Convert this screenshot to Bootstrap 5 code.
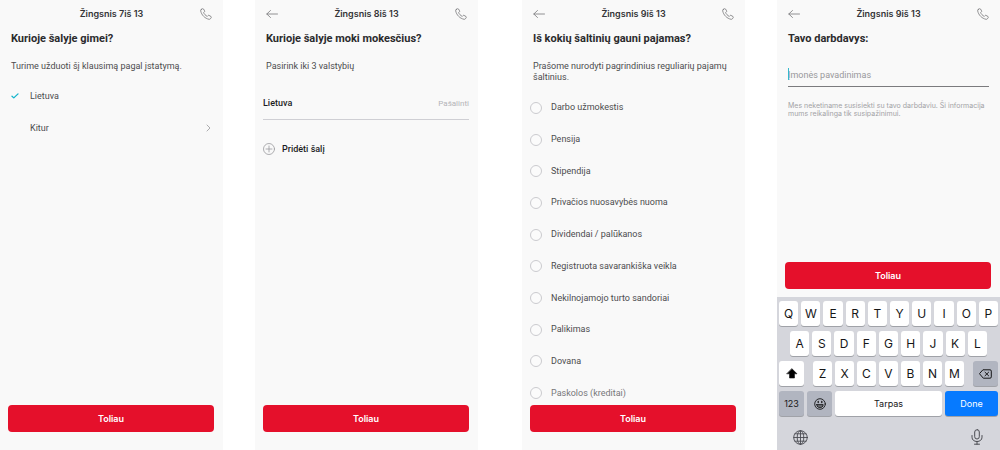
<!DOCTYPE html>
<html lang="lt">
<head>
<meta charset="utf-8">
<meta name="viewport" content="width=device-width, initial-scale=1">
<title>Registracija</title>
<link href="https://cdn.jsdelivr.net/npm/bootstrap@5.3.0/dist/css/bootstrap.min.css" rel="stylesheet">
<style>
  body { font-family: Roboto, "Liberation Sans", sans-serif; font-size: 9px; line-height: 11px; color: #4c4c4e; background: #fff; }
  button, input { font-family: inherit; }
  svg { display: block; fill: none; stroke: currentColor; stroke-linecap: round; stroke-linejoin: round; }
  .screens { gap: 32px; }
  .screen { flex: 1 1 0; min-width: 0; background: #f9f9f9; padding: 8px 9px 0 8px; }
  .screen-third { margin-left: 12px; }
  .topbar { display: grid; grid-template-columns: 16px 1fr 16px; align-items: center; height: 12px; padding: 0 2px 0 3px; color: #77777a; }
  .step { font-family: Inter, "Liberation Sans", sans-serif; font-size: 9px; line-height: 12px; font-weight: 600; color: #343436; }
  .icon-btn { padding: 0; border: 0; background: none; color: inherit; }
  .title { font-size: 11px; line-height: 14px; font-weight: 700; color: #2b2b2d; margin: 12px 3px 0; }
  .intro { margin: 15px 3px 0; }
  .choice { display: flex; align-items: center; width: 100%; height: 32px; padding: 0 3px; border: 0; background: none; color: inherit; font-size: 9px; text-align: left; }
  .tick { width: 19px; color: #13b5cc; }
  .chevron { color: #98989b; }
  .next { height: 27px; padding: 0; border: 0; border-radius: 4px; font-family: Inter, "Liberation Sans", sans-serif; font-size: 9px; line-height: 27px; font-weight: 600; color: #fff; background: #e5102b; margin-bottom: 18px; flex: none; }
  .next:hover { background: #c90d25; color: #fff; }
  .country { height: 32px; border-bottom: 1px solid #cfcfd4; color: #1c1c1e; font-weight: 500; }
  .remove { font-size: 8px; font-weight: 400; color: #b4b4b8; text-decoration: none; }
  .add { gap: 7px; margin-top: 23px; color: #1c1c1e; font-size: 9px; font-weight: 500; }
  .add svg { color: #9a9a9e; }
  .sources { flex: 1 1 0; min-height: 0; margin: 9px 0 -4px; }
  .source { flex: 1 1 0; min-height: 0; gap: 9px; }
  .source input { appearance: none; width: 12px; height: 12px; margin: 0; border: 1px solid #cbcbcf; border-radius: 50%; background: #fbfbfb; }
  .source input:checked { border: 4px solid #e5102b; }
  .source:last-child { color: #77777a; }
  .next-over { position: relative; }
  .employer { position: relative; margin: 18px 2px 0 3px; border-bottom: 1px solid #7b7b7e; }
  .employer input { display: block; width: 100%; height: 22px; padding: 0; border: 0; outline: 0; background: none; font-size: 9px; color: #343436; }
  .employer input::placeholder { color: #98989b; opacity: 1; }
  .caret { position: absolute; left: 0; top: 4px; width: 1px; height: 12px; background: #35b9cc; }
  .hint { font-family: Inter, "Liberation Sans", sans-serif; font-size: 7px; line-height: 8px; color: #a2a2a5; margin: 15px 3px 0; }
  .keyboard { font-family: Inter, "Liberation Sans", sans-serif; margin: 0 -9px 0 -8px; padding: 4px 2px 0; height: 153px; background: #d5d6dc; color: #161617; }
  .keyrow { display: flex; gap: 3px; margin-bottom: 5px; }
  .keyrow-mid { padding: 0 11px; }
  .keyrow-low { padding: 0 6px; }
  .key { flex: 1 1 0; min-width: 0; height: 25px; padding: 0; border: 0; border-radius: 3px; background: #fff; box-shadow: 0 1px 0 #a0a2a8; color: #161617; font-size: 12px; line-height: 25px; display: flex; align-items: center; justify-content: center; }
  .key-side { flex: 0 0 25px; font-size: 9px; }
  .key-grey { background: #b1b5c0; }
  .key-space { font-size: 9px; }
  .key-done { flex: 0 0 53px; font-size: 9px; background: #067aff; color: #fff; }
  .tools { padding: 8px 15px 0 14px; color: #4b4c52; }
</style>
</head>
<body>
<svg width="0" height="0" class="position-absolute" aria-hidden="true">
  <symbol id="phone" viewBox="0 0 12 12"><path d="M1.2 1.5 2.5.7c.4-.2.8-.1 1 .3l1.1 1.900c.2.4.1.7-.2 1l-.8.6c.5 1.500 1.900 3 3.700 3.900l.7-.8c.3-.3.600-.4 1-.2l2 1.100c.4.2.5.6.3 1l-.9 1.300c-.3.4-.8.6-1.300.5C4.900 10.500 1.500 7 .7 2.900c-.1-.6.100-1.100.5-1.400z"/></symbol>
  <symbol id="back" viewBox="0 0 12 10"><path d="M.8 5h10.700M4.500 1.500.8 5l3.700 3.500"/></symbol>
</svg>
<main class="screens d-flex min-vh-100">

  <section class="screen d-flex flex-column">
    <header class="topbar">
      <span></span>
      <div class="step text-center">Žingsnis 7iš 13</div>
      <button class="icon-btn ms-auto" type="button" aria-label="Skambinti"><svg width="12" height="12" stroke-width=".8"><use href="#phone"/></svg></button>
    </header>
    <h1 class="title">Kurioje šalyje gimei?</h1>
    <p class="intro">Turime užduoti šį klausimą pagal įstatymą.</p>
    <div class="pt-2">
      <button class="choice" type="button" aria-pressed="true"><span class="tick"><svg width="8" height="6" viewBox="0 0 8 6" stroke-width="1.300"><path d="M1 3.200 2.800 4.900 7 .9"/></svg></span>Lietuva</button>
      <button class="choice" type="button"><span class="tick"></span>Kitur<svg class="chevron ms-auto" width="5" height="8" viewBox="0 0 5 8" stroke-width=".8"><path d="M1 1l3 3-3 3"/></svg></button>
    </div>
    <button class="btn next w-100 mt-auto" type="button">Toliau</button>
  </section>

  <section class="screen d-flex flex-column">
    <header class="topbar">
      <button class="icon-btn" type="button" aria-label="Atgal"><svg width="12" height="10" stroke-width=".8"><use href="#back"/></svg></button>
      <div class="step text-center">Žingsnis 8iš 13</div>
      <button class="icon-btn ms-auto" type="button" aria-label="Skambinti"><svg width="12" height="12" stroke-width=".8"><use href="#phone"/></svg></button>
    </header>
    <h1 class="title">Kurioje šalyje moki mokesčius?</h1>
    <p class="intro">Pasirink iki 3 valstybių</p>
    <div class="country d-flex align-items-center justify-content-between mt-3"><span>Lietuva</span><a class="remove" href="#">Pašalinti</a></div>
    <button class="icon-btn add d-flex align-items-center" type="button"><svg width="12" height="12" viewBox="0 0 12 12" stroke-width=".8"><circle cx="6" cy="6" r="5.500"/><path d="M6 3v6M3 6h6"/></svg>Pridėti šalį</button>
    <button class="btn next w-100 mt-auto" type="button">Toliau</button>
  </section>

  <section class="screen screen-third d-flex flex-column">
    <header class="topbar">
      <button class="icon-btn" type="button" aria-label="Atgal"><svg width="12" height="10" stroke-width=".8"><use href="#back"/></svg></button>
      <div class="step text-center">Žingsnis 9iš 13</div>
      <button class="icon-btn ms-auto" type="button" aria-label="Skambinti"><svg width="12" height="12" stroke-width=".8"><use href="#phone"/></svg></button>
    </header>
    <h1 class="title">Iš kokių šaltinių gauni pajamas?</h1>
    <p class="intro">Prašome nurodyti pagrindinius reguliarių pajamų šaltinius.</p>
    <div class="sources d-flex flex-column">
      <label class="source d-flex align-items-center"><input type="radio" name="source">Darbo užmokestis</label>
      <label class="source d-flex align-items-center"><input type="radio" name="source">Pensija</label>
      <label class="source d-flex align-items-center"><input type="radio" name="source">Stipendija</label>
      <label class="source d-flex align-items-center"><input type="radio" name="source">Privačios nuosavybės nuoma</label>
      <label class="source d-flex align-items-center"><input type="radio" name="source">Dividendai / palūkanos</label>
      <label class="source d-flex align-items-center"><input type="radio" name="source">Registruota savarankiška veikla</label>
      <label class="source d-flex align-items-center"><input type="radio" name="source">Nekilnojamojo turto sandoriai</label>
      <label class="source d-flex align-items-center"><input type="radio" name="source">Palikimas</label>
      <label class="source d-flex align-items-center"><input type="radio" name="source">Dovana</label>
      <label class="source d-flex align-items-center"><input type="radio" name="source">Paskolos (kreditai)</label>
    </div>
    <button class="btn next next-over w-100" type="button">Toliau</button>
  </section>

  <section class="screen d-flex flex-column">
    <header class="topbar">
      <button class="icon-btn" type="button" aria-label="Atgal"><svg width="12" height="10" stroke-width=".8"><use href="#back"/></svg></button>
      <div class="step text-center">Žingsnis 9iš 13</div>
      <button class="icon-btn ms-auto" type="button" aria-label="Skambinti"><svg width="12" height="12" stroke-width=".8"><use href="#phone"/></svg></button>
    </header>
    <h1 class="title">Tavo darbdavys:</h1>
    <div class="employer"><input type="text" placeholder="Įmonės pavadinimas" aria-label="Įmonės pavadinimas"><span class="caret"></span></div>
    <p class="hint">Mes neketiname susisiekti su tavo darbdaviu. Ši informacija mums reikalinga tik susipažinimui.</p>
    <button class="btn next w-100 mt-auto mb-2" type="button">Toliau</button>
    <div class="keyboard">
      <div class="keyrow">
        <button class="key" type="button">Q</button><button class="key" type="button">W</button><button class="key" type="button">E</button><button class="key" type="button">R</button><button class="key" type="button">T</button><button class="key" type="button">Y</button><button class="key" type="button">U</button><button class="key" type="button">I</button><button class="key" type="button">O</button><button class="key" type="button">P</button>
      </div>
      <div class="keyrow keyrow-mid">
        <button class="key" type="button">A</button><button class="key" type="button">S</button><button class="key" type="button">D</button><button class="key" type="button">F</button><button class="key" type="button">G</button><button class="key" type="button">H</button><button class="key" type="button">J</button><button class="key" type="button">K</button><button class="key" type="button">L</button>
      </div>
      <div class="keyrow">
        <button class="key key-side" type="button" aria-label="Shift"><svg width="12" height="11" viewBox="0 0 12 11" stroke-width=".6"><path fill="#000" d="M6 .8 11 5.800H8.500V10H3.500V5.800H1z"/></svg></button>
        <div class="keyrow keyrow-low flex-grow-1 mb-0">
          <button class="key" type="button">Z</button><button class="key" type="button">X</button><button class="key" type="button">C</button><button class="key" type="button">V</button><button class="key" type="button">B</button><button class="key" type="button">N</button><button class="key" type="button">M</button>
        </div>
        <button class="key key-side key-grey" type="button" aria-label="Trinti"><svg width="13" height="10" viewBox="0 0 13 10" stroke-width="1"><path d="M4.300.8H11q1.300 0 1.300 1.300v5.800q0 1.300-1.300 1.300H4.300L.7 5zM6 3.200l3.600 3.600M9.600 3.200 6 6.800"/></svg></button>
      </div>
      <div class="keyrow">
        <button class="key key-side key-grey" type="button">123</button>
        <button class="key key-side key-grey" type="button" aria-label="Jaustukai"><svg width="12" height="12" viewBox="0 0 12 12" stroke-width=".9"><circle cx="6" cy="6" r="5.300"/><path d="M2.800 6.600h6.400C9 8.600 7.800 9.700 6 9.700S3 8.600 2.800 6.600zM3.300 8h5.400"/><path d="M4.200 3.500v1M7.800 3.500v1" stroke-width="1.300"/></svg></button>
        <button class="key key-space" type="button">Tarpas</button>
        <button class="key key-done" type="button">Done</button>
      </div>
      <div class="tools d-flex justify-content-between align-items-center">
        <button class="icon-btn" type="button" aria-label="Kalba"><svg width="15" height="15" viewBox="0 0 15 15" stroke-width=".9"><circle cx="7.500" cy="7.500" r="6.800"/><ellipse cx="7.500" cy="7.500" rx="3.300" ry="6.800"/><path d="M7.500.7v13.600M.7 7.500h13.600M2 3.800h11M2 11.200h11"/></svg></button>
        <button class="icon-btn" type="button" aria-label="Diktuoti"><svg width="12" height="16" viewBox="0 0 12 16" stroke-width="1"><rect x="3.700" y=".7" width="4.600" height="9.300" rx="2.300"/><path d="M1 6.500v1.700c0 2.600 2 4.300 5 4.300s5-1.700 5-4.300V6.500M6 12.500v2.700M3.500 15.200h5"/></svg></button>
      </div>
    </div>
  </section>
</main>
<script src="https://cdn.jsdelivr.net/npm/bootstrap@5.3.0/dist/js/bootstrap.bundle.min.js"></script>
</body>
</html>
